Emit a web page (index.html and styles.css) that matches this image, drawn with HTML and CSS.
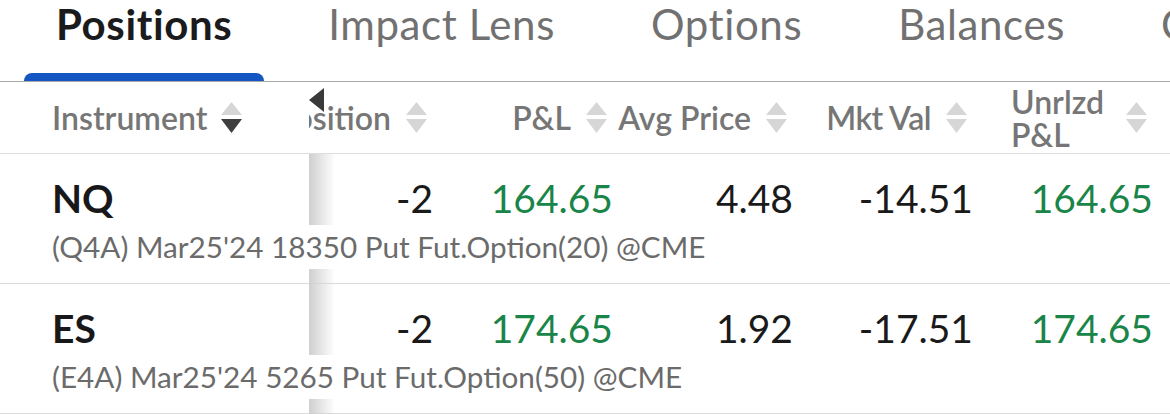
FILE: index.html
```html
<!DOCTYPE html>
<html lang="en">
<head>
<meta charset="utf-8">
<title>Positions</title>
<link rel="stylesheet" href="styles.css">
</head>
<body>
<div class="page">
  <nav class="tabs">
    <div class="tab active">Positions<span class="indicator"></span></div>
    <div class="tab">Impact Lens</div>
    <div class="tab">Options</div>
    <div class="tab">Balances</div>
    <div class="tab">Currencies</div>
  </nav>

  <div class="thead">
    <div class="th-sticky">
      <span class="label">Instrument</span>
      <svg class="sort" viewBox="0 0 21 31" width="21" height="31"><polygon class="up" points="10.5,0 21,13 0,13"/><polygon class="down on" points="0,17 21,17 10.5,31"/></svg>
    </div>
    <div class="th-scroll">
      <div class="th pos"><span class="label">Position</span><svg class="sort" viewBox="0 0 21 31" width="21" height="31"><polygon points="10.5,0 21,13 0,13"/><polygon points="0,17 21,17 10.5,31"/></svg></div>
      <div class="th"><span class="label">P&amp;L</span><svg class="sort" viewBox="0 0 21 31" width="21" height="31"><polygon points="10.5,0 21,13 0,13"/><polygon points="0,17 21,17 10.5,31"/></svg></div>
      <div class="th"><span class="label">Avg Price</span><svg class="sort" viewBox="0 0 21 31" width="21" height="31"><polygon points="10.5,0 21,13 0,13"/><polygon points="0,17 21,17 10.5,31"/></svg></div>
      <div class="th"><span class="label tight">Mkt Val</span><svg class="sort" viewBox="0 0 21 31" width="21" height="31"><polygon points="10.5,0 21,13 0,13"/><polygon points="0,17 21,17 10.5,31"/></svg></div>
      <div class="th"><span class="label wrap">Unrlzd P&amp;L</span><svg class="sort" viewBox="0 0 21 31" width="21" height="31"><polygon points="10.5,0 21,13 0,13"/><polygon points="0,17 21,17 10.5,31"/></svg></div>
    </div>
    <svg class="scroll-hint" viewBox="0 0 15 24" width="15" height="24"><polygon points="15,0 15,24 0,12"/></svg>
  </div>

  <div class="tr">
    <div class="tr-main">
      <div class="sym">NQ</div>
      <div class="vals">
        <div class="val pos">-2</div>
        <div class="val gain">164.65</div>
        <div class="val">4.48</div>
        <div class="val">-14.51</div>
        <div class="val gain">164.65</div>
      </div>
    </div>
    <div class="desc">(Q4A) Mar25'24 18350 Put Fut.Option(20) @CME</div>
    <div class="tr-foot"></div>
  </div>

  <div class="tr">
    <div class="tr-main">
      <div class="sym">ES</div>
      <div class="vals">
        <div class="val pos">-2</div>
        <div class="val gain">174.65</div>
        <div class="val">1.92</div>
        <div class="val">-17.51</div>
        <div class="val gain">174.65</div>
      </div>
    </div>
    <div class="desc">(E4A) Mar25'24 5265 Put Fut.Option(50) @CME</div>
    <div class="tr-foot"></div>
  </div>
</div>
</body>
</html>
```

FILE: styles.css
```css
* { box-sizing: border-box; }
html, body {
  margin: 0;
  padding: 0;
  background: #fff;
}
body {
  width: 1170px;
  height: 414px;
  overflow: hidden;
  font-family: "Lato", "Liberation Sans", sans-serif;
  color: #1a1a1a;
}
.page { width: 1170px; }

/* Tabs */
.tabs {
  display: flex;
  gap: 32px;
  height: 82px;
  padding-left: 24px;
  border-bottom: 1px solid #a9a9a9;
  overflow-x: clip;
  white-space: nowrap;
}
.tab {
  position: relative;
  flex: none;
  padding: 3px 32px 0;
  font-size: 42px;
  line-height: 42px;
  letter-spacing: 0.6px;
  color: #717171;
}
.tab.active {
  color: #1b1b1d;
  font-weight: 700;
}
.indicator {
  position: absolute;
  left: 0;
  right: 0;
  bottom: 0;
  height: 8px;
  border-radius: 8px 8px 0 0;
  background: #1457c2;
}

/* Header */
.thead {
  position: relative;
  display: flex;
  height: 72px;
  border-bottom: 1px solid #dcdcdc;
  font-size: 32px;
  font-weight: 600;
  color: #767676;
}
.th-sticky {
  flex: none;
  width: 309px;
  display: flex;
  align-items: center;
  gap: 14px;
  padding-left: 52px;
  background: #fff;
}
.th-scroll {
  flex: 1;
  display: flex;
  overflow: hidden;
}
.th {
  flex: none;
  width: 180px;
  display: flex;
  align-items: center;
  justify-content: flex-end;
  gap: 15px;
  padding-right: 6px;
}
.th.pos { width: 124px; }
.label { white-space: nowrap; }
.label.tight { letter-spacing: -0.5px; }
.label.wrap {
  white-space: normal;
  width: 100px;
  line-height: 33px;
}
.sort { flex: none; display: block; }
.sort polygon { fill: #d6d6d6; }
.sort polygon.on { fill: #3e3e3e; }
.scroll-hint {
  position: absolute;
  left: 309px;
  top: 6px;
  fill: #3a3a3a;
}

/* Rows */
.tr {
  position: relative;
  border-bottom: 1px solid #dcdcdc;
}
.tr::after {
  content: "";
  position: absolute;
  left: 309px;
  top: 0;
  bottom: -1px;
  width: 26px;
  background: linear-gradient(90deg, #cfcfcf, rgba(255, 255, 255, 0));
  z-index: 1;
  pointer-events: none;
}
.tr-main {
  display: flex;
  height: 71px;
}
.sym {
  flex: none;
  width: 309px;
  padding: 21px 0 0 52px;
  font-size: 39px;
  line-height: 46px;
  font-weight: 700;
  color: #18181a;
}
.vals { display: flex; }
.val {
  flex: none;
  width: 180px;
  padding-top: 21px;
  text-align: right;
  font-size: 39px;
  line-height: 46px;
  color: #1a1a1a;
}
.val.pos { width: 124px; }
.val.gain { color: #198548; }
.desc {
  position: relative;
  z-index: 2;
  height: 44px;
  padding-left: 52px;
  background: #fff;
  font-size: 29.7px;
  line-height: 44px;
  color: #6b6b6b;
  white-space: nowrap;
}
.tr-foot { height: 14px; }
```
